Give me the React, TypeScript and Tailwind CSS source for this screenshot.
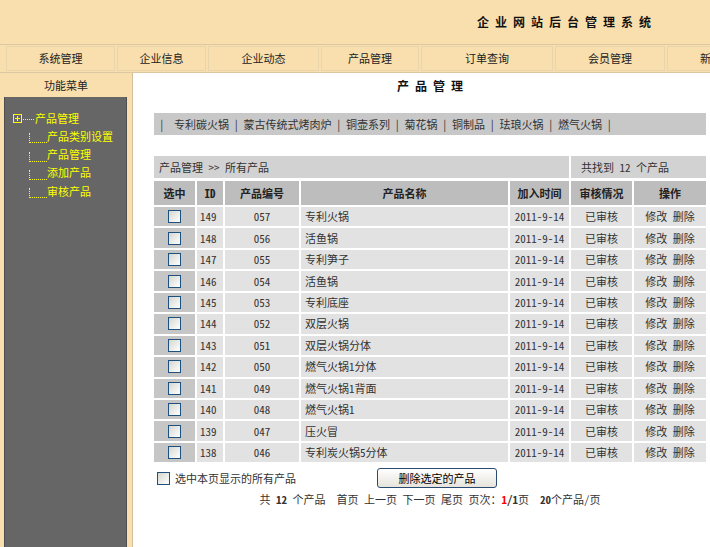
import React from "react";

const navItems: [string, number][] = [
  ["系统管理", 109],
  ["企业信息", 89],
  ["企业动态", 111],
  ["产品管理", 98],
  ["订单查询", 132],
  ["会员管理", 110],
  ["新闻管理", 110],
];

const categories = ["专利碳火锅", "蒙古传统式烤肉炉", "铜壶系列", "菊花锅", "铜制品", "珐琅火锅", "燃气火锅"];

const products: [number, string, string][] = [
  [149, "057", "专利火锅"],
  [148, "056", "活鱼锅"],
  [147, "055", "专利笋子"],
  [146, "054", "活鱼锅"],
  [145, "053", "专利底座"],
  [144, "052", "双层火锅"],
  [143, "051", "双层火锅分体"],
  [142, "050", "燃气火锅1分体"],
  [141, "049", "燃气火锅1背面"],
  [140, "048", "燃气火锅1"],
  [139, "047", "压火冒"],
  [138, "046", "专利炭火锅5分体"],
];

const subMenu = ["产品类别设置", "产品管理", "添加产品", "审核产品"];

const grid = "grid grid-cols-[41px_26px_74px_207px_59px_61px_72px] gap-[2px]";

const CheckBox = () => (
  <span className="inline-block h-[13px] w-[13px] shrink-0 border border-[#1c5180] bg-linear-to-br from-[#d6d6d0] to-white" />
);

export default function App() {
  return (
    <div className="flex h-screen w-full flex-col overflow-hidden bg-white font-['Noto_Sans_Mono_CJK_SC','Noto_Sans_CJK_SC',sans-serif] text-[11px] leading-none text-[#333]">
      {/* header */}
      <div className="flex h-[44px] shrink-0 items-center justify-end bg-[#fadfae] pr-[53px]">
        <h1 className="text-[12px] font-bold tracking-[6px] text-[#111]">企业网站后台管理系统</h1>
      </div>

      {/* top nav */}
      <div className="flex shrink-0 gap-[2px] border-y border-[#dcc7a3] bg-[#fadfae] py-[1px] pl-[6px]">
        {navItems.map(([label, w]) => (
          <div
            key={label}
            style={{ width: w }}
            className="flex h-[25px] shrink-0 items-center justify-center border border-[#ead4ae] text-[#222]"
          >
            {label}
          </div>
        ))}
      </div>

      <div className="flex min-h-0 flex-1">
        {/* left menu */}
        <aside className="flex w-[133px] shrink-0 flex-col border-r border-[#d6c09a] bg-[#fadfae]">
          <div className="flex h-[24px] items-center justify-center text-[#222]">功能菜单</div>
          <div className="ml-[4px] w-[123px] flex-1 border-x border-[#4e4e4e] bg-[#666666] pt-[12px] text-[#ffff00]">
            <div className="flex h-[18px] items-center pl-[8px]">
              <svg width="9" height="9" viewBox="0 0 9 9" className="shrink-0">
                <rect x="0.5" y="0.5" width="8" height="8" fill="none" stroke="#ffff00" />
                <line x1="2" y1="4.5" x2="7" y2="4.5" stroke="#ffff00" />
                <line x1="4.5" y1="2" x2="4.5" y2="7" stroke="#ffff00" />
              </svg>
              <span className="mx-[1px] w-[11px] translate-y-[1px] border-b border-dotted border-[#ffff00]" />
              <span>产品管理</span>
            </div>
            {subMenu.map((item) => (
              <div key={item} className="flex h-[18.3px] items-center pl-[24px]">
                <span className="mb-[2px] h-[10px] w-[18px] shrink-0 self-end border-b border-l border-dotted border-[#ffff00]" />
                <span>{item}</span>
              </div>
            ))}
          </div>
        </aside>

        {/* main content */}
        <main className="flex-1 pl-[21px] pr-[4px]">
          <div className="flex h-[26px] items-center justify-center pl-[6px]">
            <h2 className="text-[12px] font-bold tracking-[6px] text-[#111]">产品管理</h2>
          </div>

          <div className="mt-[14px] flex h-[22px] items-center bg-[#c8c8c8] pl-[5px] text-[#333]">
            <span>|</span>
            <span className="ml-[5px]" />
            {categories.map((c) => (
              <React.Fragment key={c}>
                <span className="px-[4.5px]">{c}</span>
                <span>|</span>
              </React.Fragment>
            ))}
          </div>

          {/* product table */}
          <div className={`${grid} mt-[21px]`}>
            <div className="col-span-5 flex h-[22px] items-center bg-[#d2d2d2] pl-[5px]">产品管理 &gt;&gt; 所有产品</div>
            <div className="col-span-2 flex h-[22px] items-center bg-[#d2d2d2] pl-[10px]">共找到 12 个产品</div>

            {["选中", "ID", "产品编号", "产品名称", "加入时间", "审核情况", "操作"].map((h) => (
              <div key={h} className="mt-[1px] flex h-[24px] items-center justify-center bg-[#bdbdbd] font-bold text-[#222]">
                {h}
              </div>
            ))}

            {products.map(([id, code, name]) => (
              <React.Fragment key={id}>
                <div className="flex h-[19.45px] items-center justify-center bg-[#c6c6c6]">
                  <CheckBox />
                </div>
                <div className="flex items-center bg-[#e2e2e2] pl-[3px]">{id}</div>
                <div className="flex items-center justify-center bg-[#e2e2e2]">{code}</div>
                <div className="flex items-center bg-[#e2e2e2] pl-[4px]">{name}</div>
                <div className="flex items-center justify-center bg-[#e2e2e2]">2011-9-14</div>
                <div className="flex items-center justify-center bg-[#e2e2e2]">已审核</div>
                <div className="flex items-center justify-center bg-[#e2e2e2]">修改 删除</div>
              </React.Fragment>
            ))}
          </div>

          <div className="mt-[6px] flex h-[20px] items-center pl-[3px]">
            <CheckBox />
            <span className="ml-[5px]">选中本页显示的所有产品</span>
            <button className="ml-[81px] h-[20px] w-[120px] rounded-[3px] border border-[#294a72] bg-linear-to-b from-white to-[#e6e4dc] text-[11px] text-black">
              删除选定的产品
            </button>
          </div>

          <div className="mt-[4px] flex h-[14px] items-center justify-center whitespace-pre">
            共 <b>12</b> 个产品  首页 上一页 下一页 尾页 页次：<b className="text-[#ff0000]">1</b>
            <b>/1</b>页  <b>20</b>个产品/页
          </div>
        </main>
      </div>
    </div>
  );
}
